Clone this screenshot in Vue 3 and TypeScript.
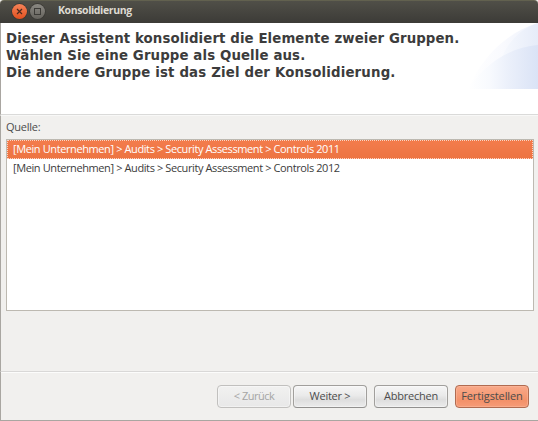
<script setup lang="ts">
import { ref } from 'vue'

interface WizardButton {
  label: string
  kind: 'disabled' | 'normal' | 'primary'
}

const headline: string[] = [
  'Dieser Assistent konsolidiert die Elemente zweier Gruppen.',
  'Wählen Sie eine Gruppe als Quelle aus.',
  'Die andere Gruppe ist das Ziel der Konsolidierung.',
]
const sources: string[] = [
  '[Mein Unternehmen] > Audits > Security Assessment > Controls 2011',
  '[Mein Unternehmen] > Audits > Security Assessment > Controls 2012',
]
const selected = ref(0)
const navigation: WizardButton[] = [
  { label: '< Zurück', kind: 'disabled' },
  { label: 'Weiter >', kind: 'normal' },
]
const actions: WizardButton[] = [
  { label: 'Abbrechen', kind: 'normal' },
  { label: 'Fertigstellen', kind: 'primary' },
]
</script>

<template>
  <div class="window">
    <header class="titlebar">
      <svg class="controls" width="38" height="23" viewBox="0 0 38 23">
        <defs>
          <linearGradient id="close" x1="0" y1="0" x2="0" y2="1">
            <stop offset="0" stop-color="#f58358" />
            <stop offset="1" stop-color="#e2501f" />
          </linearGradient>
          <linearGradient id="max" x1="0" y1="0" x2="0" y2="1">
            <stop offset="0" stop-color="#8b8983" />
            <stop offset="1" stop-color="#65635d" />
          </linearGradient>
        </defs>
        <circle cx="9.5" cy="11.5" r="8.2" fill="#383733" />
        <circle cx="9.5" cy="11.5" r="7.5" fill="url(#close)" />
        <path d="M7 9l5 5M12 9l-5 5" stroke="#4a2a1e" stroke-width="1.2" />
        <circle cx="27.5" cy="11.5" r="8.2" fill="#383733" />
        <circle cx="27.5" cy="11.5" r="7.5" fill="url(#max)" />
        <rect x="24.5" y="8.5" width="6" height="6" fill="none" stroke="#3c3b37" />
      </svg>
      <span class="title">Konsolidierung</span>
    </header>
    <section class="banner">
      <h1 class="headline">
        <span v-for="line in headline" :key="line" class="line">{{ line }}</span>
      </h1>
      <svg class="swoosh" width="70" height="66" viewBox="0 0 70 66">
        <defs>
          <linearGradient id="outer" gradientUnits="userSpaceOnUse" x1="0" y1="0" x2="70" y2="0">
            <stop offset="0" stop-color="#fff" />
            <stop offset="0.5" stop-color="#f9fafe" />
            <stop offset="1" stop-color="#edf1fb" />
          </linearGradient>
          <linearGradient id="middle" gradientUnits="userSpaceOnUse" x1="30" y1="0" x2="70" y2="0">
            <stop offset="0" stop-color="#f8fafe" />
            <stop offset="1" stop-color="#e6ecf9" />
          </linearGradient>
          <linearGradient id="inner" gradientUnits="userSpaceOnUse" x1="0" y1="0" x2="70" y2="0">
            <stop offset="0" stop-color="#fff" />
            <stop offset="0.3" stop-color="#f8fafe" />
            <stop offset="0.6" stop-color="#eaeffa" />
            <stop offset="1" stop-color="#dae3f6" />
          </linearGradient>
        </defs>
        <path d="M0 66C12 38 36 10 70 0V66Z" fill="url(#outer)" />
        <path d="M32 40C38 20 52 6 70 0V40Z" fill="url(#middle)" />
        <path d="M0 66C14 44 40 24 70 22V66Z" fill="url(#inner)" />
      </svg>
    </section>
    <main class="content">
      <label class="label">Quelle:</label>
      <ul class="list">
        <li
          v-for="(source, i) in sources"
          :key="source"
          class="row"
          :class="{ selected: selected === i }"
          @click="selected = i"
        >
          {{ source }}
        </li>
      </ul>
    </main>
    <footer class="footer">
      <div class="group">
        <button v-for="b in navigation" :key="b.label" class="btn" :class="b.kind" :disabled="b.kind === 'disabled'">
          {{ b.label }}
        </button>
      </div>
      <div class="group">
        <button v-for="b in actions" :key="b.label" class="btn action" :class="b.kind">
          {{ b.label }}
        </button>
      </div>
    </footer>
  </div>
</template>

<style>
body {
  background: #f1f0ee;
  overflow: hidden;
}
</style>

<style scoped>
.window {
  box-sizing: border-box;
  width: 538px;
  height: 421px;
  display: flex;
  flex-direction: column;
  background: #f1f0ee;
  color: #4c4c4c;
  font-family: 'Open Sans', 'Noto Sans', sans-serif;
  font-size: 11px;
  border-bottom: 1px solid #a9a6a1;
}
.titlebar {
  box-sizing: border-box;
  height: 23px;
  flex: none;
  display: flex;
  align-items: center;
  padding-left: 10px;
  background: linear-gradient(#504f48, #3c3b37);
  border-top: 1px solid #62614f;
  border-radius: 4px 4px 0 0;
}
.controls {
  flex: none;
  margin-top: -1px;
}
.title {
  margin: -4px 0 0 10px;
  color: #dfdbd2;
  font-size: 10.5px;
  font-weight: 700;
  letter-spacing: -0.38px;
}
.banner {
  box-sizing: border-box;
  height: 92px;
  flex: none;
  display: flex;
  justify-content: space-between;
  padding-left: 5px;
  background: #fff;
  border-left: 1px solid #a9a6a1;
  border-bottom: 1px solid #dadad9;
}
.headline {
  margin: 7px 0 0;
  color: #3c3c3c;
  font: 700 13.33px/17px 'DejaVu Sans', sans-serif;
}
.line {
  display: block;
  white-space: nowrap;
  letter-spacing: 0.09px;
}
.line:nth-child(2) {
  letter-spacing: 0.11px;
}
.line:nth-child(3) {
  letter-spacing: 0.16px;
}
.swoosh {
  flex: none;
}
.content {
  box-sizing: border-box;
  height: 256px;
  flex: none;
  padding: 3px 4px 0 5px;
  border-left: 1px solid #a9a6a1;
  border-top: 1px solid #f8f8f7;
}
.label {
  display: block;
  height: 20px;
  line-height: 16px;
  letter-spacing: -0.25px;
}
.list {
  box-sizing: border-box;
  height: 172px;
  margin: 0;
  padding: 0;
  list-style: none;
  background: #fff;
  border: 1px solid #bdb9b1;
}
.row {
  box-sizing: border-box;
  height: 19px;
  padding: 0 5px;
  border: 1px solid transparent;
  color: #3c3c3c;
  line-height: 15px;
  letter-spacing: -0.395px;
  white-space: nowrap;
}
.selected {
  color: #fff;
  background: linear-gradient(#f37c4c, #ed7442);
  border: 1px dotted #fbd6c5;
}
.footer {
  box-sizing: border-box;
  flex: 1;
  display: flex;
  justify-content: flex-end;
  gap: 7px;
  padding: 13px 9px 0 0;
  border-left: 1px solid #a9a6a1;
  border-top: 1px solid #d9d8d7;
  box-shadow: inset 0 1px #fcfcfb;
}
.group {
  display: flex;
  align-items: flex-start;
  gap: 2px;
}
.btn {
  box-sizing: border-box;
  width: 74px;
  height: 23px;
  padding: 0 0 1px;
  border: 1px solid #a19f9c;
  border-bottom-color: #91908e;
  border-radius: 4px;
  background: linear-gradient(#f6f6f6, #eaeaea 45%, #dedede 65%, #ebebeb);
  box-shadow: inset 0 0 0 1px #ffffff66;
  color: #4c4c4c;
  font: inherit;
  line-height: 20px;
  letter-spacing: -0.25px;
  white-space: nowrap;
}
.action + .action {
  margin-left: 5px;
}
.disabled {
  color: #a5a5a4;
  border-color: #c1c0be;
  background: linear-gradient(#f1f1f0, #e8e8e8);
  letter-spacing: -0.5px;
}
.primary {
  border-color: #b06b50;
  background: linear-gradient(#f8a98a, #f59973 50%, #f39169 70%, #f69c78);
  box-shadow: inset 0 0 0 1px #ffc4aa66;
  letter-spacing: -0.1px;
}
</style>
